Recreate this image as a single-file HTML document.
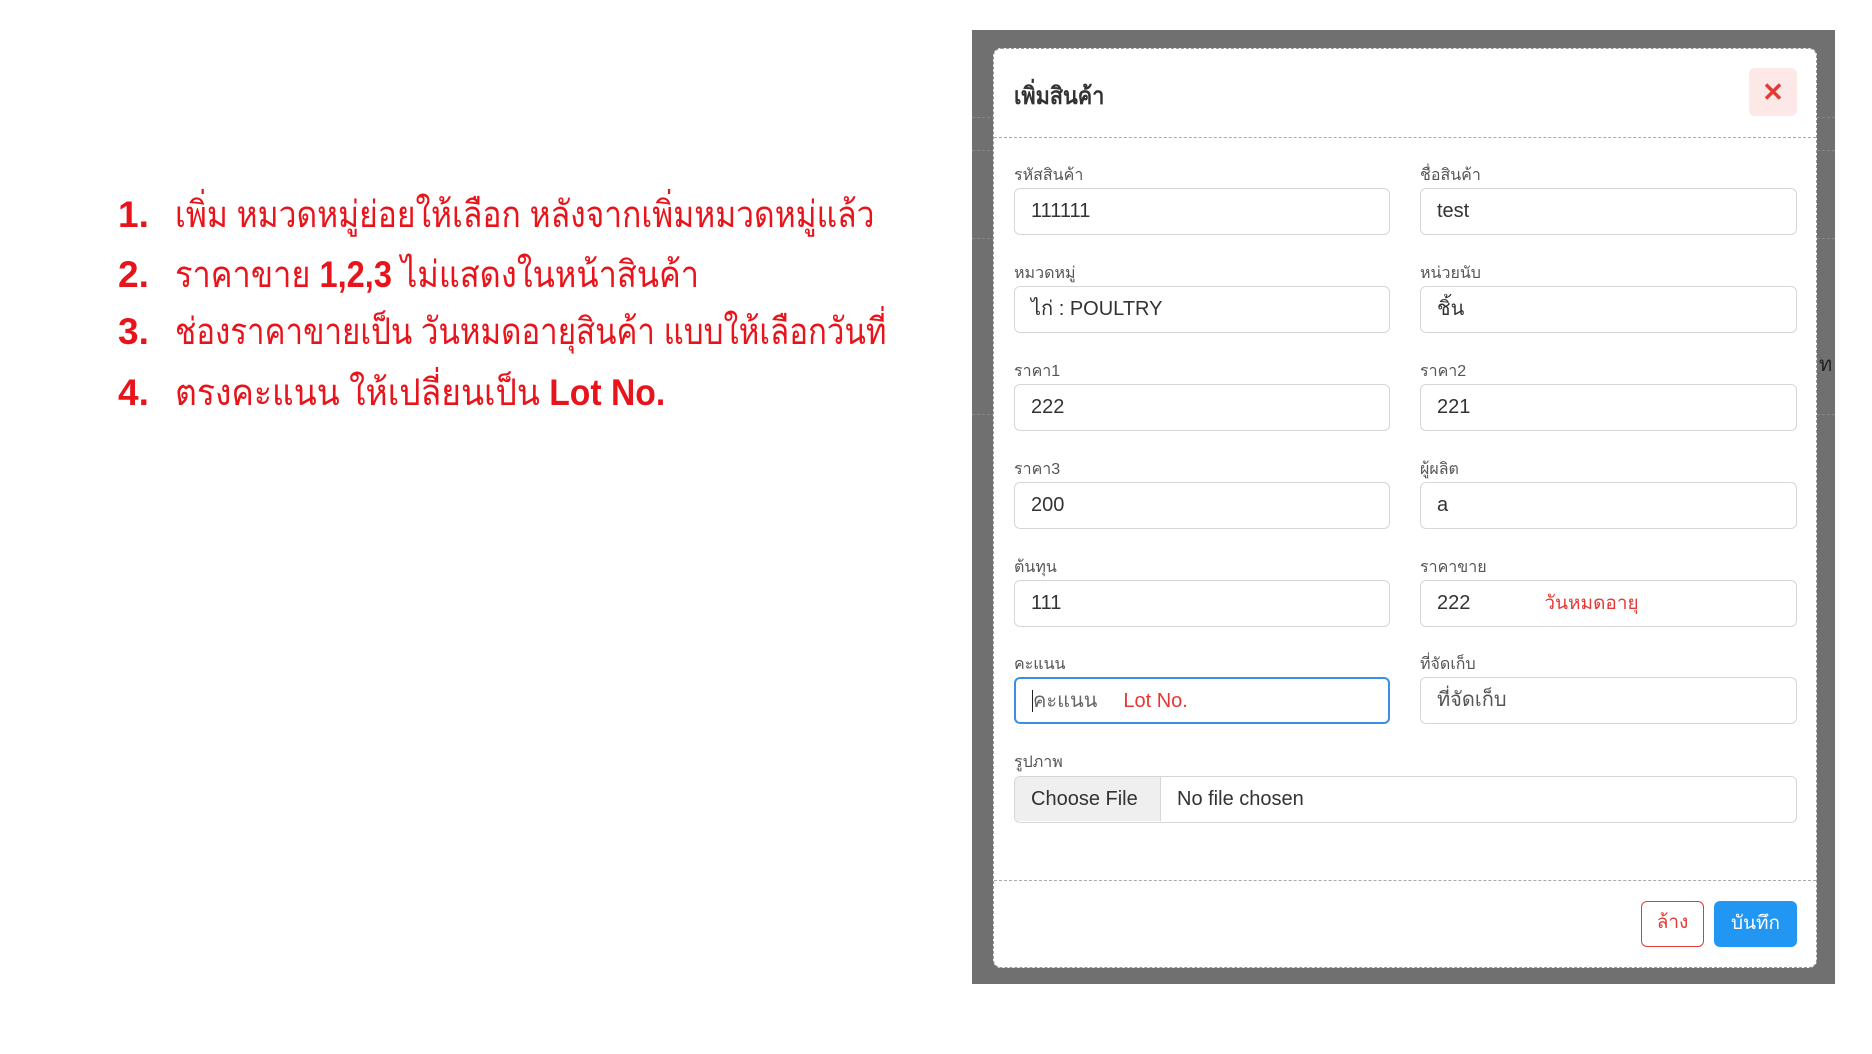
<!DOCTYPE html>
<html><head><meta charset="utf-8"><style>
body{margin:0;width:1872px;height:1054px;background:#fff;position:relative;overflow:hidden;font-family:"Liberation Sans","Noto Sans CJK SC",sans-serif;}
.ab{position:absolute}
.ln{position:absolute;left:118px;color:#e8141b;font-size:37px;white-space:nowrap}
.ln b{display:inline-block;width:57px;font-weight:bold}
.ln i{font-style:normal;display:inline-block;transform-origin:0 50%}
.gray{left:972px;top:30px;width:863px;height:954px;background:#707070}
.modal{left:993px;top:48px;width:824px;height:920px;background:#fff;border-radius:8px;border:1px dashed #999;box-sizing:border-box}
.lbl{position:absolute;font-size:16px;color:#555}
.inp{position:absolute;height:47px;border:1.5px solid #d6d6d6;border-radius:6px;box-sizing:border-box;font-size:20px;color:#333;padding-left:16px;line-height:44px;background:#fff}
</style></head><body>
<div class="ln" style="top:185px"><b>1.</b><i style="transform:scaleX(0.86)">เพิ่ม หมวดหมู่ย่อยให้เลือก หลังจากเพิ่มหมวดหมู่แล้ว</i></div>
<div class="ln" style="top:245px"><b>2.</b><i style="transform:scaleX(0.88)">ราคาขาย <span style="font-weight:bold">1,2,3</span> ไม่แสดงในหน้าสินค้า</i></div>
<div class="ln" style="top:302px"><b>3.</b><i style="transform:scaleX(0.845)">ช่องราคาขายเป็น วันหมดอายุสินค้า แบบให้เลือกวันที่</i></div>
<div class="ln" style="top:363px"><b>4.</b><i style="transform:scaleX(0.91)">ตรงคะแนน ให้เปลี่ยนเป็น <span style="font-weight:bold">Lot No.</span></i></div>

<div class="ab gray"></div>
<div class="ab" style="left:972px;top:117px;width:863px;border-top:1px dashed #888"></div>
<div class="ab" style="left:972px;top:150px;width:863px;border-top:1px dashed #888"></div>
<div class="ab" style="left:972px;top:238px;width:863px;border-top:1px dashed #888"></div>
<div class="ab" style="left:972px;top:414px;width:863px;border-top:1px dashed #888"></div>
<div class="ab" style="left:1819px;top:348px;color:#222;font-size:20px">ท</div>
<div class="ab modal"></div>
<div class="ab" style="left:1014px;top:76px;font-size:24px;color:#333;font-weight:bold;transform:scaleX(0.9);transform-origin:0 0">เพิ่มสินค้า</div>
<div class="ab" style="left:1749px;top:68px;width:48px;height:48px;background:#fde8e8;border-radius:6px;color:#e53935;font-size:26px;text-align:center;line-height:48px;font-weight:bold">✕</div>
<div class="ab" style="left:994px;top:137px;width:822px;border-top:1px dashed #aaa"></div>

<div class="lbl" style="left:1014px;top:163px">รหัสสินค้า</div><div class="inp" style="left:1014px;top:188px;width:376px">111111</div>
<div class="lbl" style="left:1420px;top:163px">ชื่อสินค้า</div><div class="inp" style="left:1420px;top:188px;width:377px">test</div>
<div class="lbl" style="left:1014px;top:261px">หมวดหมู่</div><div class="inp" style="left:1014px;top:286px;width:376px">ไก่ : POULTRY</div>
<div class="lbl" style="left:1420px;top:261px">หน่วยนับ</div><div class="inp" style="left:1420px;top:286px;width:377px">ชิ้น</div>
<div class="lbl" style="left:1014px;top:359px">ราคา1</div><div class="inp" style="left:1014px;top:384px;width:376px">222</div>
<div class="lbl" style="left:1420px;top:359px">ราคา2</div><div class="inp" style="left:1420px;top:384px;width:377px">221</div>
<div class="lbl" style="left:1014px;top:457px">ราคา3</div><div class="inp" style="left:1014px;top:482px;width:376px">200</div>
<div class="lbl" style="left:1420px;top:457px">ผู้ผลิต</div><div class="inp" style="left:1420px;top:482px;width:377px">a</div>
<div class="lbl" style="left:1014px;top:555px">ต้นทุน</div><div class="inp" style="left:1014px;top:580px;width:376px">111</div>
<div class="lbl" style="left:1420px;top:555px">ราคาขาย</div><div class="inp" style="left:1420px;top:580px;width:377px">222<span style="color:#e53935;font-size:19px;margin-left:74px">วันหมดอายุ</span></div>
<div class="lbl" style="left:1014px;top:652px">คะแนน</div><div class="inp" style="left:1014px;top:677px;width:376px;border:2px solid #3b8fe0;color:#666"><span style="border-left:1.5px solid #222">คะแนน</span><span style="color:#e53935;margin-left:26px">Lot No.</span></div>
<div class="lbl" style="left:1420px;top:652px">ที่จัดเก็บ</div><div class="inp" style="left:1420px;top:677px;width:377px;color:#555">ที่จัดเก็บ</div>
<div class="lbl" style="left:1014px;top:750px">รูปภาพ</div>
<div class="inp" style="left:1014px;top:776px;width:783px;padding:0;overflow:hidden"><span style="display:inline-block;width:146px;background:#efefef;border-right:1.5px solid #d6d6d6;padding-left:16px;box-sizing:border-box;height:44px">Choose File</span><span style="margin-left:16px">No file chosen</span></div>
<div class="ab" style="left:994px;top:880px;width:822px;border-top:1px dashed #aaa"></div>
<div class="ab" style="left:1641px;top:901px;width:63px;height:46px;border:1.5px solid #e53935;border-radius:6px;box-sizing:border-box;color:#e53935;font-size:19px;text-align:center;line-height:42px">ล้าง</div>
<div class="ab" style="left:1714px;top:901px;width:83px;height:46px;background:#2196f3;border-radius:6px;color:#fff;font-size:19px;text-align:center;line-height:45px">บันทึก</div>
</body></html>
